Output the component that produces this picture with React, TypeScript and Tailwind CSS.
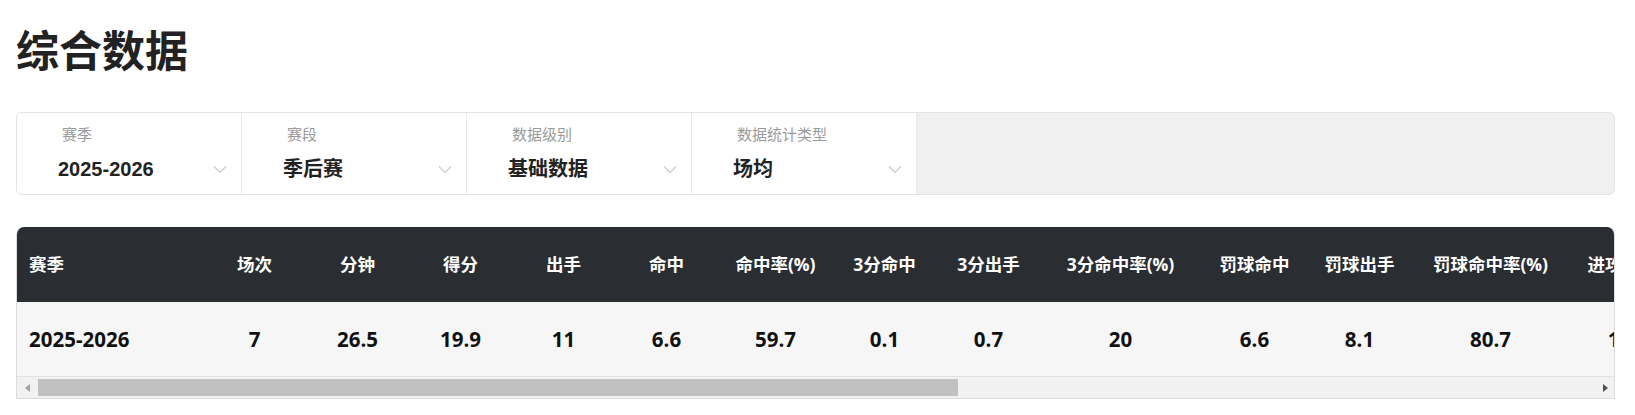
import React from "react";

type Col = { h: string; v: string; w: string };

const cols: Col[] = [
  { h: "赛季", v: "2025-2026", w: "w-[186px]" },
  { h: "场次", v: "7", w: "w-[103px]" },
  { h: "分钟", v: "26.5", w: "w-[103px]" },
  { h: "得分", v: "19.9", w: "w-[103px]" },
  { h: "出手", v: "11", w: "w-[103px]" },
  { h: "命中", v: "6.6", w: "w-[103px]" },
  { h: "命中率(%)", v: "59.7", w: "w-[115px]" },
  { h: "3分命中", v: "0.1", w: "w-[103px]" },
  { h: "3分出手", v: "0.7", w: "w-[105px]" },
  { h: "3分命中率(%)", v: "20", w: "w-[159px]" },
  { h: "罚球命中", v: "6.6", w: "w-[109px]" },
  { h: "罚球出手", v: "8.1", w: "w-[101px]" },
  { h: "罚球命中率(%)", v: "80.7", w: "w-[161px]" },
  { h: "进攻篮板", v: "1.6", w: "w-[103px]" },
  { h: "防守篮板", v: "4.1", w: "w-[106px]" },
  { h: "篮板", v: "5.7", w: "w-[106px]" },
  { h: "助攻", v: "3.3", w: "w-[106px]" },
  { h: "抢断", v: "1.1", w: "w-[106px]" },
  { h: "盖帽", v: "0.4", w: "w-[106px]" },
  { h: "失误", v: "2.1", w: "w-[106px]" },
  { h: "犯规", v: "2.4", w: "w-[106px]" },
  { h: "正负值", v: "3.6", w: "w-[106px]" },
  { h: "效率值", v: "20.1", w: "w-[106px]" },
];

const filters = [
  { label: "赛季", value: "2025-2026" },
  { label: "赛段", value: "季后赛" },
  { label: "数据级别", value: "基础数据" },
  { label: "数据统计类型", value: "场均" },
];

function Chevron() {
  return (
    <svg width="14" height="9" viewBox="0 0 14 9" fill="none" className="shrink-0">
      <polyline points="1,1.5 7,7.5 13,1.5" stroke="#c9c9c9" strokeWidth="1.1" fill="none" />
    </svg>
  );
}

export default function App() {
  return (
    <div
      className="w-full bg-white pl-4 pr-5 pb-4"
      style={{ fontFamily: '"Liberation Sans", "Noto Sans CJK SC", sans-serif' }}
    >
      <h1
        className="mt-[18px] text-[43px] leading-[60px] font-bold text-[#222]"
        style={{ fontFamily: '"Noto Sans CJK SC", sans-serif' }}
      >
        综合数据
      </h1>

      <div className="mt-[34px] flex h-[83px] overflow-hidden rounded-[6px] border border-[#e3e3e3] bg-[#f0f0f0]">
        {filters.map((f) => (
          <div key={f.label} className="w-[225px] shrink-0 border-r border-[#e8e8e8] bg-white">
            <div className="pl-[45px] pt-[12px] text-[15px] leading-[20px] text-[#9a9a9a]">
              {f.label}
            </div>
            <div className="mt-[10px] flex h-[28px] items-center justify-between pl-[41px] pr-[14px]">
              <span className="text-[20px] leading-[28px] font-bold text-[#222]">{f.value}</span>
              <Chevron />
            </div>
          </div>
        ))}
      </div>

      <div className="mt-[32px] overflow-hidden rounded-t-[8px] border border-t-0 border-[#dcdcdc]">
        <div className="overflow-hidden">
          <table
            className="w-[2611px] table-fixed border-collapse"
            style={{ fontFamily: '"Open Sans", "Noto Sans CJK SC", sans-serif' }}
          >
            <colgroup>
              {cols.map((c) => (
                <col key={c.h} className={c.w} />
              ))}
            </colgroup>
            <thead>
              <tr className="h-[75px] bg-[#2a2e32] text-white">
                {cols.map((c, i) => (
                  <th
                    key={c.h}
                    className={
                      i === 0
                        ? "pl-[12px] text-left text-[17.5px] font-bold whitespace-nowrap"
                        : "text-center text-[17.5px] font-bold whitespace-nowrap"
                    }
                  >
                    {c.h}
                  </th>
                ))}
              </tr>
            </thead>
            <tbody>
              <tr className="h-[74px] bg-[#f6f6f6] text-[#111]">
                {cols.map((c, i) => (
                  <td
                    key={c.h}
                    className={
                      i === 0
                        ? "pl-[12px] text-left text-[20.5px] font-bold whitespace-nowrap"
                        : "text-center text-[20.5px] font-bold whitespace-nowrap"
                    }
                  >
                    {c.v}
                  </td>
                ))}
              </tr>
            </tbody>
          </table>
        </div>
        <div className="flex h-[22px] items-center border-t border-[#e2e2e2] bg-[#f1f1f1]">
          <div className="flex h-full w-[21px] shrink-0 items-center justify-center">
            <svg width="5" height="8" viewBox="0 0 5 8">
              <polygon points="5,0 0,4 5,8" fill="#a3a3a3" />
            </svg>
          </div>
          <div className="h-[17px] w-[920px] shrink-0 bg-[#c1c1c1]" />
          <div className="flex-1" />
          <div className="flex h-full w-[17px] shrink-0 items-center justify-center">
            <svg width="5" height="8" viewBox="0 0 5 8">
              <polygon points="0,0 5,4 0,8" fill="#505050" />
            </svg>
          </div>
        </div>
      </div>
    </div>
  );
}
